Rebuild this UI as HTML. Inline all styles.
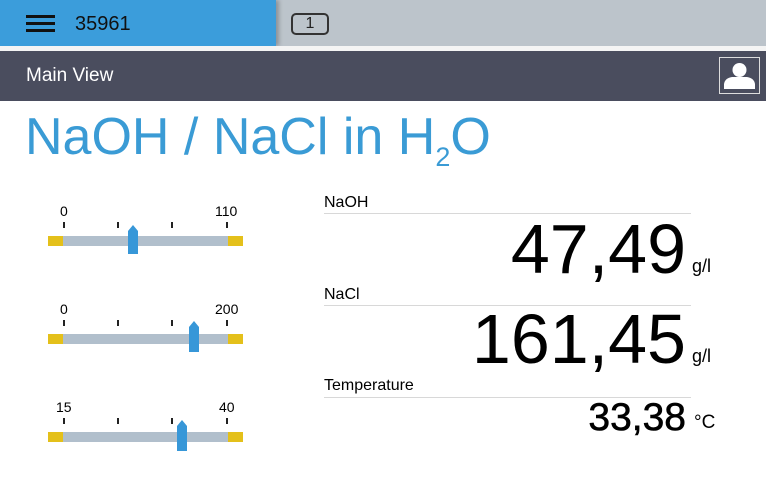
<!DOCTYPE html>
<html><head><meta charset="utf-8"><style>
*{margin:0;padding:0;box-sizing:border-box}
body{width:766px;height:480px;background:#fff;position:relative;overflow:hidden;font-family:"Liberation Sans",sans-serif;color:#000}
.a{position:absolute}
.t{position:absolute;white-space:nowrap;line-height:1}
.tick{position:absolute;width:2px;height:6px;background:#222}
.bar{position:absolute;left:48px;width:195px;height:10px;background:#b1bfcc}
.y{position:absolute;top:0;width:15px;height:10px;background:#e4c01a}
.ptr{position:absolute;width:10px;background:#3797d8}
.ptr:before{content:"";position:absolute;left:0;top:-6px;border-left:5px solid transparent;border-right:5px solid transparent;border-bottom:6px solid #3797d8}
.line{position:absolute;left:324px;width:367px;height:1px;background:#d8d8d8}
</style></head><body>
<div class="a" style="left:0;top:0;width:766px;height:46px;background:#bcc4cb"></div>
<div class="a" style="left:0;top:0;width:276px;height:46px;background:#3b9ddb;box-shadow:3px 0 4px rgba(0,0,0,.25)"></div>
<div class="a" style="left:26px;top:15px;width:29px;height:3px;background:#111"></div>
<div class="a" style="left:26px;top:22px;width:29px;height:3px;background:#111"></div>
<div class="a" style="left:26px;top:29px;width:29px;height:3px;background:#111"></div>
<div class="t" style="left:75px;top:14px;font-size:20px;color:#111">35961</div>
<div class="a" style="left:291px;top:13px;width:38px;height:22px;border:2px solid #333;border-radius:5px;font-size:16px;text-align:center;line-height:18px;color:#222">1</div>
<div class="a" style="left:0;top:46px;width:766px;height:5px;background:#f4f4f4"></div>
<div class="a" style="left:0;top:51px;width:766px;height:50px;background:#4a4d5e"></div>
<div class="t" style="left:26px;top:66px;font-size:19px;color:#fff">Main View</div>
<div class="a" style="left:719px;top:57px;width:41px;height:37px;border:1.5px solid #ddd"></div>
<svg class="a" style="left:719px;top:57px" width="41" height="37"><circle cx="20.5" cy="13" r="7" fill="#fff"/><path d="M5 32 L5 27 Q6 21 13 20 L28 20 Q35 21 36 27 L36 32 Z" fill="#fff"/></svg>
<div class="t" style="left:25px;top:111px;font-size:52px;color:#3a9bd5">NaOH / NaCl in H<span style="font-size:27px;position:relative;top:12px">2</span>O</div>

<!-- gauge 1 -->
<div class="t" style="left:60px;top:204px;font-size:14px">0</div>
<div class="t" style="left:215px;top:204px;font-size:14px">110</div>
<div class="tick" style="left:63px;top:222px"></div><div class="tick" style="left:117px;top:222px"></div><div class="tick" style="left:171px;top:222px"></div><div class="tick" style="left:226px;top:222px"></div>
<div class="bar" style="top:236px"><div class="y" style="left:0"></div><div class="y" style="right:0"></div></div>
<div class="ptr" style="left:128px;top:231px;height:23px"></div>
<!-- gauge 2 -->
<div class="t" style="left:60px;top:302px;font-size:14px">0</div>
<div class="t" style="left:215px;top:302px;font-size:14px">200</div>
<div class="tick" style="left:63px;top:320px"></div><div class="tick" style="left:117px;top:320px"></div><div class="tick" style="left:171px;top:320px"></div><div class="tick" style="left:226px;top:320px"></div>
<div class="bar" style="top:334px"><div class="y" style="left:0"></div><div class="y" style="right:0"></div></div>
<div class="ptr" style="left:189px;top:327px;height:25px"></div>
<!-- gauge 3 -->
<div class="t" style="left:56px;top:400px;font-size:14px">15</div>
<div class="t" style="left:219px;top:400px;font-size:14px">40</div>
<div class="tick" style="left:63px;top:418px"></div><div class="tick" style="left:117px;top:418px"></div><div class="tick" style="left:171px;top:418px"></div><div class="tick" style="left:226px;top:418px"></div>
<div class="bar" style="top:432px"><div class="y" style="left:0"></div><div class="y" style="right:0"></div></div>
<div class="ptr" style="left:177px;top:426px;height:25px"></div>

<div class="t" style="left:324px;top:195px;font-size:16px">NaOH</div>
<div class="line" style="top:213px"></div>
<div class="t" style="right:80px;top:214px;font-size:70px">47,49</div>
<div class="t" style="left:692px;top:257px;font-size:18px">g/l</div>
<div class="t" style="left:324px;top:287px;font-size:16px">NaCl</div>
<div class="line" style="top:305px"></div>
<div class="t" style="right:80px;top:304px;font-size:70px">161,45</div>
<div class="t" style="left:692px;top:347px;font-size:18px">g/l</div>
<div class="t" style="left:324px;top:378px;font-size:16px">Temperature</div>
<div class="line" style="top:397px"></div>
<div class="t" style="right:80px;top:398px;font-size:39px;-webkit-text-stroke:0.6px #000">33,38</div>
<div class="t" style="left:694px;top:413px;font-size:19px">°C</div>
</body></html>
